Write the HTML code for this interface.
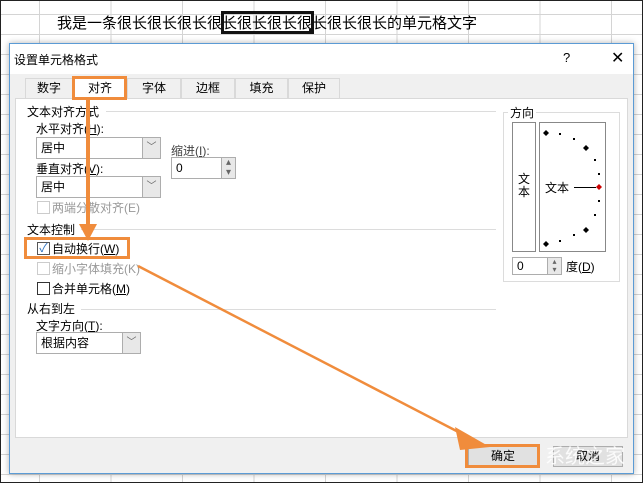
<!DOCTYPE html>
<html><head><meta charset="utf-8"><style>
*{margin:0;padding:0;box-sizing:border-box}
body{width:643px;height:483px;overflow:hidden;background:#fff;position:relative;font-family:"Liberation Sans","Noto Sans CJK SC",sans-serif;font-size:12px;color:#000}
.a{position:absolute}
.grid{position:absolute;left:0;top:0;width:643px;height:483px;border:1px solid #222;
background-image:linear-gradient(to right,#d4d4d4 1px,transparent 1px),linear-gradient(to bottom,#d4d4d4 1px,transparent 1px);background-size:71.5px 20px;background-position:38px 13px}
.dlg{position:absolute;left:9px;top:43px;width:625px;height:431px;background:#f0f0f0;border:1px solid #5b9bd5;box-shadow:0 0 6px rgba(0,0,0,.3)}
.tb{position:absolute;left:0;top:0;width:623px;height:30px;background:#fff}
.tab{position:absolute;top:34px;height:21px;border:1px solid #d9d9d9;border-bottom:none;background:#f0f0f0;text-align:center;line-height:19px;font-size:12px}
.panel{position:absolute;left:5px;top:54px;width:613px;height:340px;background:#fff;border:1px solid #d9d9d9}
.sel{position:absolute;height:22px;border:1px solid #adadad;background:#fff;padding-left:4px;line-height:20px}
.sel i{position:absolute;right:0;top:0;width:18px;height:20px;background:#e8e8e8;border-left:1px solid #adadad;font-style:normal;color:#666;text-align:center;font-size:10px}
.grp{position:absolute;height:1px;background:#dcdcdc}
.cb{position:absolute;width:13px;height:13px;border:1px solid #333;background:#fff}
.btn{position:absolute;top:402px;height:21px;border:1px solid #adadad;background:#e1e1e1;text-align:center;line-height:19px}
.or{position:absolute;border:3px solid #f08c3c}
</style></head><body>
<div class="grid"></div>
<div class="a" style="left:57px;top:12px;font-size:15px;letter-spacing:0">我是一条很长很长很长很长很长很长很长很长很长的单元格文字</div>
<div class="a" style="left:221px;top:11px;width:93px;height:23px;border:3px solid #111"></div>
<div class="a" style="left:309px;top:29px;width:5px;height:5px;background:#111"></div>
<div class="dlg">
 <div class="tb"><span class="a" style="left:4px;top:7px;font-size:12px">设置单元格格式</span><span class="a" style="left:553px;top:6px;font-size:13px">?</span><span class="a" style="left:601px;top:4px;font-size:16px">✕</span></div>
 <div class="tab" style="left:15px;width:48px">数字</div>
 <div class="tab" style="left:63px;width:54px;background:#fff;height:22px">对齐</div>
 <div class="tab" style="left:117px;width:54px">字体</div>
 <div class="tab" style="left:171px;width:54px">边框</div>
 <div class="tab" style="left:225px;width:53px">填充</div>
 <div class="tab" style="left:278px;width:52px">保护</div>
 <div class="panel">
  <span class="a" style="left:11px;top:4px">文本对齐方式</span><div class="grp" style="left:90px;top:12px;width:390px"></div>
  <span class="a" style="left:20px;top:21px">水平对齐(<u>H</u>):</span>
  <div class="sel" style="left:20px;top:38px;width:125px">居中<i>﹀</i></div>
  <span class="a" style="left:155px;top:43px;color:#444">缩进(<u>I</u>):</span>
  <div class="sel" style="left:155px;top:58px;width:65px">0<i style="width:14px;line-height:10px">▴<br>▾</i></div>
  <span class="a" style="left:20px;top:61px">垂直对齐(<u>V</u>):</span>
  <div class="sel" style="left:20px;top:77px;width:125px">居中<i>﹀</i></div>
  <div class="cb" style="left:21px;top:102px;border-color:#ccc"></div><span class="a" style="left:36px;top:100px;color:#999">两端分散对齐(E)</span>
  <span class="a" style="left:11px;top:122px">文本控制</span><div class="grp" style="left:65px;top:130px;width:415px"></div>
  <div class="cb" style="left:21px;top:143px;border-color:#555;color:#2a6fbf;font-size:12px;line-height:10px;text-align:center">✓</div><span class="a" style="left:36px;top:141px">自动换行(<u>W</u>)</span>
  <div class="cb" style="left:21px;top:163px;border-color:#ccc"></div><span class="a" style="left:36px;top:161px;color:#999">缩小字体填充(K)</span>
  <div class="cb" style="left:21px;top:183px"></div><span class="a" style="left:36px;top:181px">合并单元格(<u>M</u>)</span>
  <span class="a" style="left:11px;top:201px">从右到左</span><div class="grp" style="left:65px;top:210px;width:415px"></div>
  <span class="a" style="left:20px;top:218px">文字方向(<u>T</u>):</span>
  <div class="sel" style="left:20px;top:233px;width:105px">根据内容<i>﹀</i></div>
  <div class="a" style="left:487px;top:13px;width:117px;height:170px;border:1px solid #dcdcdc"></div>
  <span class="a" style="left:492px;top:5px;background:#fff;padding:0 2px">方向</span>
  <div class="a" style="left:496px;top:23px;width:24px;height:130px;border:1px solid #888;background:#fff"><span class="a" style="left:5px;top:50px;line-height:13px">文<br>本</span></div>
  <div class="a" style="left:523px;top:23px;width:67px;height:130px;border:1px solid #888">
   <svg width="67" height="130" class="a" style="left:0;top:0">
    <g fill="#000"><path d="M6 7l3 3-3 3-3-3z"/><path d="M46 22l3 3-3 3-3-3z"/><path d="M46 104l3 3-3 3-3-3z"/><path d="M6 118l3 3-3 3-3-3z"/>
    <rect x="19" y="10" width="2" height="2"/><rect x="33" y="15" width="2" height="2"/><rect x="54" y="36" width="2" height="2"/><rect x="58" y="50" width="2" height="2"/><rect x="58" y="77" width="2" height="2"/><rect x="54" y="91" width="2" height="2"/><rect x="33" y="111" width="2" height="2"/><rect x="19" y="117" width="2" height="2"/>
    <rect x="34" y="64" width="22" height="1"/></g>
    <path d="M59 61l3 3-3 3-3-3z" fill="#c00"/>
    <text x="5" y="69" font-size="12" font-family="Noto Sans CJK SC">文本</text>
   </svg>
  </div>
  <div class="sel" style="left:496px;top:158px;width:50px;height:18px;line-height:16px">0<i style="width:14px;height:16px;line-height:8px;font-size:8px">▴<br>▾</i></div>
  <span class="a" style="left:550px;top:159px">度(<u>D</u>)</span>
 </div>
 <div class="btn" style="left:458px;width:70px">确定</div>
 <div class="btn" style="left:543px;width:70px">取消</div>
</div>
<div class="or" style="left:72px;top:76px;width:55px;height:24px"></div>
<div class="or" style="left:24px;top:237px;width:106px;height:22px"></div>
<div class="or" style="left:465px;top:444px;width:75px;height:24px"></div>
<svg class="a" style="left:0;top:0" width="643" height="483">
 <line x1="88" y1="100" x2="88" y2="226" stroke="#f08c3c" stroke-width="4"/>
 <path d="M79 224h18l-9 17z" fill="#f08c3c"/>
 <line x1="138" y1="266" x2="470" y2="438" stroke="#f08c3c" stroke-width="2.5"/>
 <path d="M455 427l35 20-30 3z" fill="#f08c3c"/>
</svg>
<div class="a" style="left:545px;top:440px;font-size:20px;color:rgba(255,255,255,.85)">系统之家</div>
</body></html>
